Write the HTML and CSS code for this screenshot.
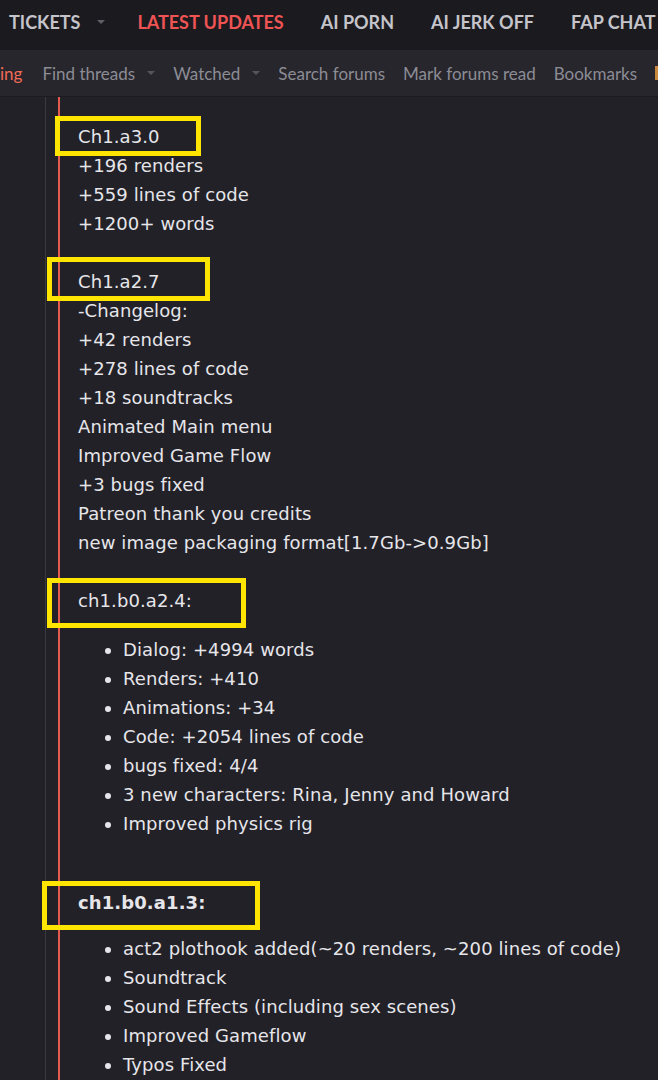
FILE: index.html
```html
<!DOCTYPE html>
<html lang="en">
<head>
<meta charset="utf-8">
<title>Changelog</title>
<link rel="stylesheet" href="styles.css">
</head>
<body>
<header class="nav">
  <span class="nav-item nav-item--menu">TICKETS<span class="caret"></span></span>
  <span class="nav-item nav-item--active">LATEST UPDATES</span>
  <span class="nav-item">AI PORN</span>
  <span class="nav-item">AI JERK OFF</span>
  <span class="nav-item">FAP CHAT</span>
</header>
<nav class="subnav">
  <span class="sub-item sub-item--active">ing</span>
  <span class="sub-item">Find threads<span class="caret caret--sub"></span></span>
  <span class="sub-item">Watched<span class="caret caret--sub"></span></span>
  <span class="sub-item">Search forums</span>
  <span class="sub-item">Mark forums read</span>
  <span class="sub-item">Bookmarks</span>
  <span class="sub-badge"></span>
</nav>
<main class="page">
  <div class="thread">
    <article class="post">
      <span class="mark mark--1"></span>
      <span class="mark mark--2"></span>
      <span class="mark mark--3"></span>
      <span class="mark mark--4"></span>

      <div class="line">Ch1.a3.0</div>
      <div class="line">+196 renders</div>
      <div class="line">+559 lines of code</div>
      <div class="line">+1200+ words</div>
      <div class="line blank"></div>

      <div class="line">Ch1.a2.7</div>
      <div class="line">-Changelog:</div>
      <div class="line">+42 renders</div>
      <div class="line">+278 lines of code</div>
      <div class="line">+18 soundtracks</div>
      <div class="line">Animated Main menu</div>
      <div class="line">Improved Game Flow</div>
      <div class="line">+3 bugs fixed</div>
      <div class="line">Patreon thank you credits</div>
      <div class="line">new image packaging format[1.7Gb-&gt;0.9Gb]</div>
      <div class="line blank"></div>

      <div class="line">ch1.b0.a2.4:</div>
      <ul class="list">
        <li>Dialog: +4994 words</li>
        <li>Renders: +410</li>
        <li>Animations: +34</li>
        <li>Code: +2054 lines of code</li>
        <li>bugs fixed: 4/4</li>
        <li>3 new characters: Rina, Jenny and Howard</li>
        <li>Improved physics rig</li>
      </ul>
      <div class="line blank"></div>

      <div class="line line--bold">ch1.b0.a1.3:</div>
      <ul class="list list--last">
        <li>act2 plothook added(~20 renders, ~200 lines of code)</li>
        <li>Soundtrack</li>
        <li>Sound Effects (including sex scenes)</li>
        <li>Improved Gameflow</li>
        <li>Typos Fixed</li>
      </ul>
    </article>
  </div>
</main>
</body>
</html>
```

FILE: styles.css
```css
html, body {
  margin: 0;
  padding: 0;
}

body {
  background: #222127;
  overflow: hidden;
  height: 1080px;
}

.nav {
  display: flex;
  align-items: flex-start;
  height: 50px;
  background: #1b1a1f;
  white-space: nowrap;
  overflow: hidden;
  padding-left: 9px;
  box-sizing: border-box;
  font-family: "Lato", "Liberation Sans", sans-serif;
  font-weight: 700;
  font-size: 18px;
  color: #c4c4ca;
}

.nav-item {
  display: flex;
  align-items: center;
  flex: none;
  padding: 11px 37px 0 0;
  line-height: 22px;
}

.nav-item--menu {
  padding-right: 32px;
}

.nav-item--active {
  color: #ee5454;
}

.caret {
  display: inline-block;
  width: 0;
  height: 0;
  margin-left: 17px;
  border-left: 4px solid transparent;
  border-right: 4px solid transparent;
  border-top: 4px solid #5f5f67;
}

.caret--sub {
  margin-left: 12px;
  border-top-color: #55555d;
}

.subnav {
  display: flex;
  align-items: center;
  height: 47px;
  background: #27262c;
  border-bottom: 1px solid #1c1b20;
  box-sizing: border-box;
  white-space: nowrap;
  overflow: hidden;
  font-family: "Lato", "Liberation Sans", sans-serif;
  font-size: 17px;
  color: #8c8c95;
}

.sub-item {
  display: flex;
  align-items: center;
  flex: none;
  padding-right: 18px;
}

.sub-item--active {
  color: #f06a56;
  padding-right: 20px;
}

.sub-badge {
  flex: none;
  width: 6px;
  height: 14px;
  margin-left: 0;
  background: #c8893c;
}

.page {
  padding-left: 45px;
}

.thread {
  border-left: 1px solid #3a3940;
  padding-left: 12px;
  min-height: 990px;
}

.post {
  position: relative;
  border-left: 2px solid #e35a4f;
  padding: 25px 0 0 18px;
  min-height: 990px;
  font-family: "DejaVu Sans", Verdana, sans-serif;
  font-size: 18px;
  line-height: 29px;
  letter-spacing: 0.1px;
  color: #e6e6ea;
  white-space: nowrap;
}

.line {
  min-height: 29px;
}

.line--bold {
  font-weight: 700;
}

.list {
  margin: 20px 0 21px;
  padding-left: 45px;
}

.list--last {
  margin-top: 17px;
}

.mark {
  position: absolute;
  border: 5px solid #ffe500;
  box-sizing: border-box;
}

.mark--1 { left: -5px;  top: 19px;  width: 146px; height: 40px; }
.mark--2 { left: -13px; top: 160px; width: 163px; height: 44px; }
.mark--3 { left: -13px; top: 481px; width: 199px; height: 50px; }
.mark--4 { left: -18px; top: 784px; width: 218px; height: 49px; }
```
